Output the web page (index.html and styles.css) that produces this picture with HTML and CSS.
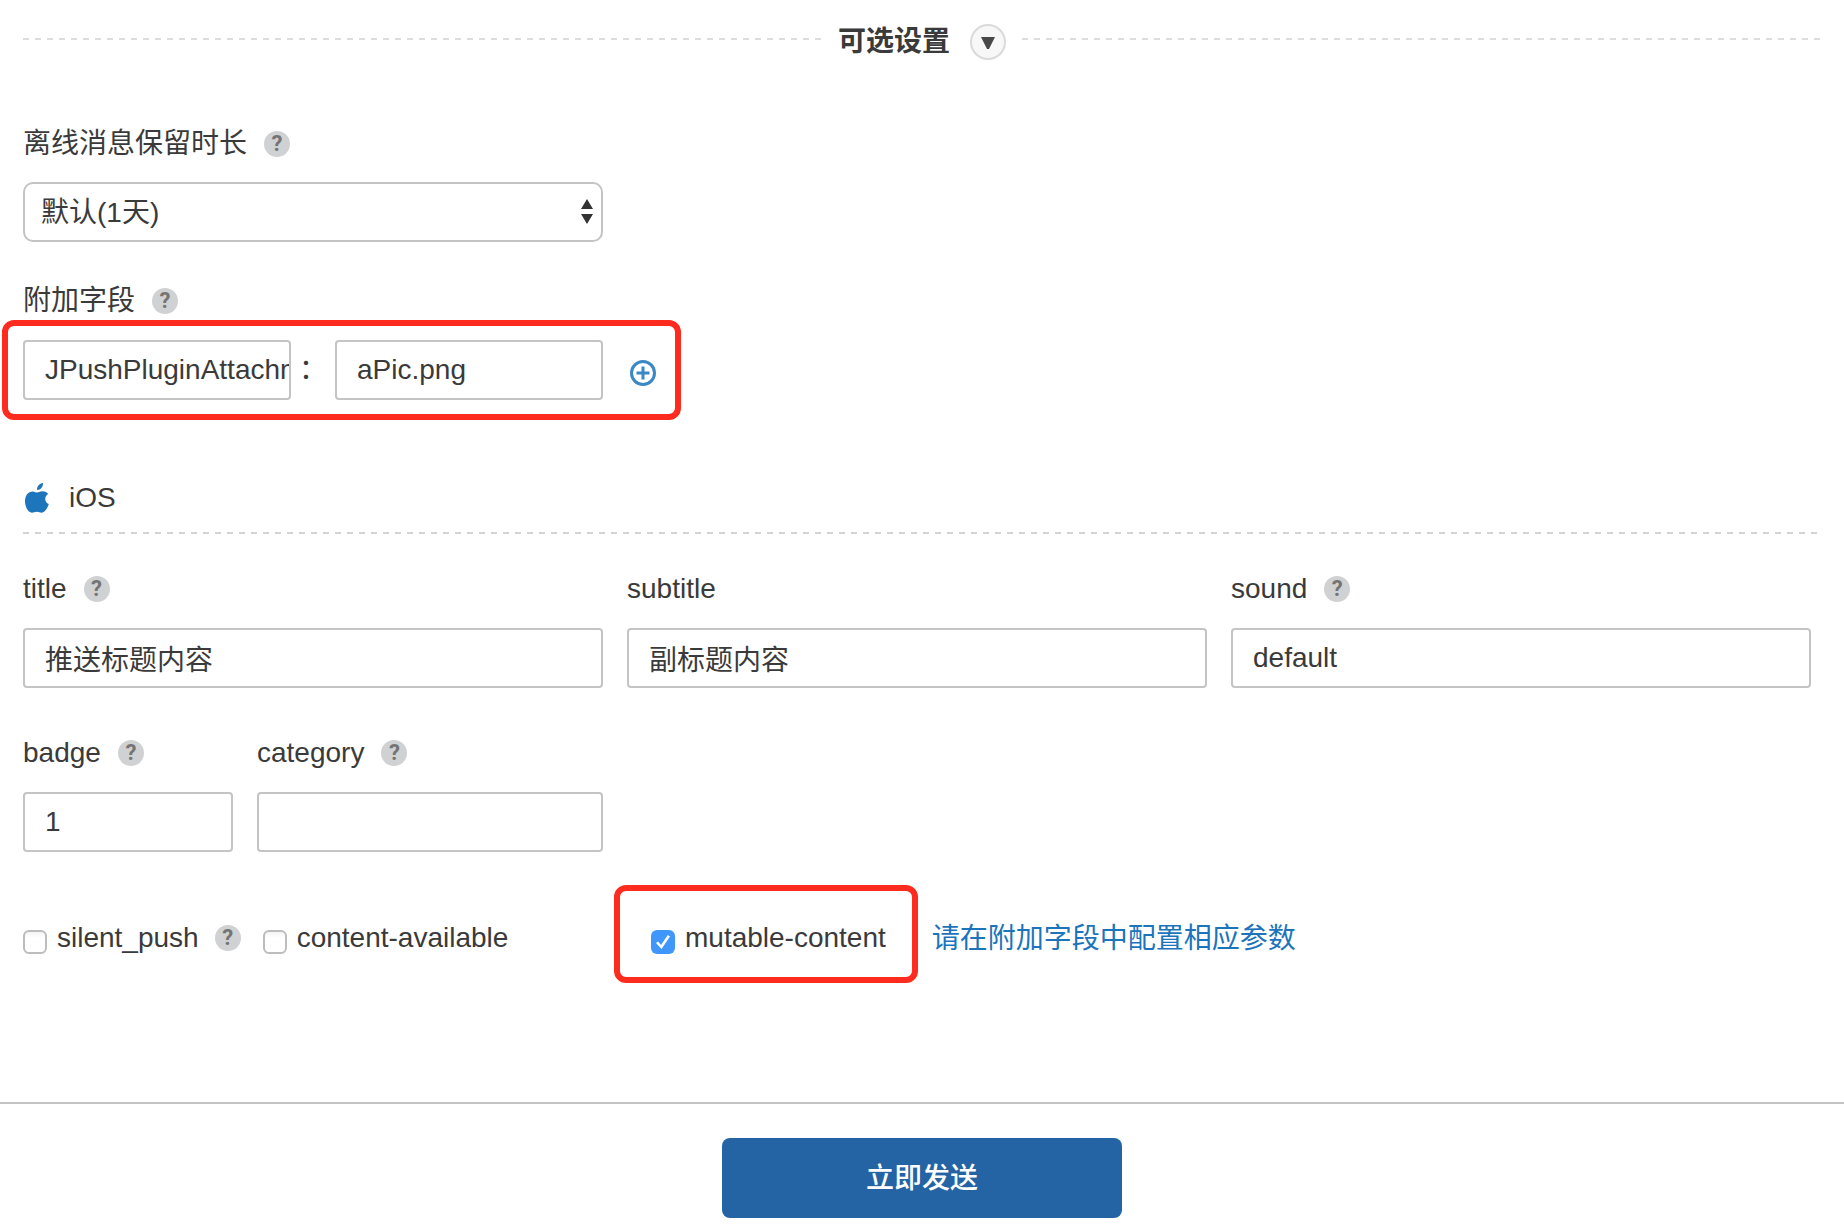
FILE: index.html
```html
<!DOCTYPE html>
<html lang="zh-CN">
<head>
    <meta charset="UTF-8">
    <meta name="viewport" content="width=device-width, initial-scale=1.0">
    <title>可选设置</title>
    <link rel="stylesheet" href="styles.css">
</head>
<body>
    <form class="push-form">
        <div class="optional-header">
            <h2>可选设置</h2>
            <button type="button" class="toggle" aria-label="展开">
                <svg width="36" height="36" viewBox="0 0 36 36">
                    <circle cx="18" cy="18" r="17" fill="#f7f7f7" stroke="#dadada" stroke-width="2"/>
                    <path d="M11 13h14l-6 12h-2z" fill="#484848"/>
                </svg>
            </button>
        </div>

        <div class="row">
            <div class="field">
                <div class="field-label">
                    <label for="timeToLive">离线消息保留时长</label>
                    <button type="button" class="help" aria-label="帮助">?</button>
                </div>
                <div class="select-wrap">
                    <select id="timeToLive">
                        <option>默认(1天)</option>
                    </select>
                    <svg class="select-arrows" width="12" height="25" viewBox="0 0 12 25">
                        <path d="M6 0l6 10H0zM6 25l6-10H0z" fill="#333"/>
                    </svg>
                </div>
            </div>
        </div>

        <div class="row row-extras">
            <div class="field">
                <div class="field-label">
                    <label for="extraKey">附加字段</label>
                    <button type="button" class="help" aria-label="帮助">?</button>
                </div>
                <div class="highlight extras">
                    <input type="text" id="extraKey" value="JPushPluginAttachment">
                    <span class="colon">：</span>
                    <input type="text" id="extraValue" aria-label="附加字段值" value="aPic.png">
                    <button type="button" class="add" aria-label="添加">
                        <svg width="26" height="26" viewBox="0 0 26 26" fill="none" stroke="#3a88c5">
                            <circle cx="13" cy="13" r="11.5" stroke-width="3"/>
                            <path d="M13 6.500v13M6.500 13h13" stroke-width="3"/>
                        </svg>
                    </button>
                </div>
            </div>
        </div>

        <div class="platform">
            <svg width="26" height="30" viewBox="0 0 26 30" fill="#1d75bb">
                <path d="M20 0c.3 3.600-2.200 7-6 7-.3-3.700 2.400-6.600 6-7z"/>
                <path d="M14 9.500c1.700 0 3.200-1.200 5.600-1.200 2.400 0 4.400 1 5.500 2.600-4 2.600-3.800 8.200.7 10.200-1.200 4-4 8.600-7.200 8.600-1.800 0-2.700-1-4.800-1s-3.200 1-4.900 1C5.500 29.700 2 24.300 2 18.300c0-6.200 3.500-9.900 7.500-9.900 1.900 0 3.200 1.100 4.500 1.100z"/>
            </svg>
            <h3>iOS</h3>
        </div>

        <div class="row">
            <div class="field">
                <div class="field-label">
                    <label for="title">title</label>
                    <button type="button" class="help" aria-label="帮助">?</button>
                </div>
                <input type="text" id="title" value="推送标题内容">
            </div>
            <div class="field">
                <div class="field-label">
                    <label for="subtitle">subtitle</label>
                </div>
                <input type="text" id="subtitle" value="副标题内容">
            </div>
            <div class="field">
                <div class="field-label">
                    <label for="sound">sound</label>
                    <button type="button" class="help" aria-label="帮助">?</button>
                </div>
                <input type="text" id="sound" value="default">
            </div>
        </div>

        <div class="row row-badge">
            <div class="split">
                <div class="field">
                    <div class="field-label">
                        <label for="badge">badge</label>
                        <button type="button" class="help" aria-label="帮助">?</button>
                    </div>
                    <input type="text" id="badge" value="1">
                </div>
                <div class="field">
                    <div class="field-label">
                        <label for="category">category</label>
                        <button type="button" class="help" aria-label="帮助">?</button>
                    </div>
                    <input type="text" id="category">
                </div>
            </div>
        </div>

        <div class="row row-checks">
            <div class="checks">
                <div class="check">
                    <input type="checkbox" id="silentPush">
                    <label for="silentPush">silent_push</label>
                    <button type="button" class="help" aria-label="帮助">?</button>
                </div>
                <div class="check">
                    <input type="checkbox" id="contentAvailable">
                    <label for="contentAvailable">content-available</label>
                </div>
            </div>
            <div class="mutable">
                <div class="highlight check">
                    <input type="checkbox" id="mutableContent" checked>
                    <label for="mutableContent">mutable-content</label>
                </div>
                <a href="#extraKey">请在附加字段中配置相应参数</a>
            </div>
        </div>

        <div class="form-footer">
            <button type="submit" class="submit">立即发送</button>
        </div>
    </form>
</body>
</html>
```
FILE: styles.css
```css
* {
    box-sizing: border-box;
}
body {
    margin: 0;
    background-color: #fff;
    color: #3a3a3a;
    font-family: "Liberation Sans", "Noto Sans CJK SC", sans-serif;
    font-size: 28px;
    line-height: 40px;
}
button, input, select {
    font: inherit;
    color: inherit;
}
button {
    padding: 0;
    border: none;
    background: none;
    cursor: pointer;
}
svg {
    display: block;
}
.push-form {
    padding-top: 22px;
}
.optional-header {
    display: flex;
    align-items: center;
    margin: 0 23px 62px;
}
.optional-header::before,
.optional-header::after {
    content: "";
    flex: 1;
    height: 2px;
    margin-bottom: 6px;
    background: repeating-linear-gradient(90deg, #ddd 0 6px, transparent 6px 12px);
}
.optional-header h2 {
    margin: 0 20px 0 16px;
    font-size: 28px;
    font-weight: bold;
}
.toggle {
    margin-right: 16px;
}
.row {
    display: grid;
    grid-template-columns: repeat(3, 1fr);
    gap: 24px;
    margin: 0 33px 0 23px;
}
.row-extras {
    margin-top: 39px;
}
.row-badge {
    margin-top: 45px;
}
.row-checks {
    margin-top: 33px;
    margin-bottom: 119px;
}
.field {
    min-width: 0;
}
.field-label {
    display: flex;
    align-items: center;
    gap: 17px;
    margin-bottom: 18px;
}
.row-badge .field-label,
.platform + .row .field-label {
    margin-bottom: 19px;
}
.help {
    width: 26px;
    height: 26px;
    border-radius: 50%;
    background-color: #cfd1d2;
    color: #747474;
    font-family: Roboto, sans-serif;
    font-size: 22px;
    font-weight: bold;
    line-height: 26px;
}
input[type="text"],
select {
    display: block;
    width: 100%;
    height: 60px;
    border: 2px solid #c4c4c4;
    background-color: #fff;
}
input[type="text"] {
    padding: 0 0 0 20px;
    border-radius: 4px;
}
.select-wrap {
    position: relative;
}
select {
    appearance: none;
    padding: 2px 32px 0 16px;
    border-radius: 10px;
}
.select-arrows {
    position: absolute;
    top: 17px;
    right: 10px;
    pointer-events: none;
}
.highlight {
    border: 6px solid #fd2c1e;
    border-radius: 12px;
}
.row-extras .field-label {
    margin-bottom: 19px;
}
.extras {
    display: flex;
    align-items: center;
    margin: -20px -78px 0 -21px;
    padding: 14px 19px 14px 15px;
}
.extras input {
    flex: 1;
    min-width: 0;
}
.colon {
    width: 44px;
    padding-left: 8px;
}
.add {
    margin: 6px 0 0 27px;
}
.platform {
    display: flex;
    align-items: center;
    gap: 20px;
    margin: 58px 23px 35px;
    padding-bottom: 16px;
    background: repeating-linear-gradient(90deg, #d4d4d4 0 6px, transparent 6px 12px) bottom / 100% 2px no-repeat;
}
.platform h3 {
    margin: 0;
    font-size: 28px;
    font-weight: normal;
}
.split {
    display: grid;
    grid-template-columns: 210px 1fr;
    gap: 24px;
}
.checks,
.mutable,
.check {
    display: flex;
    align-items: center;
}
.checks {
    gap: 22px;
    padding-top: 8px;
}
.check {
    white-space: nowrap;
}
.check label {
    margin-left: 10px;
}
.check .help {
    margin-left: 16px;
}
input[type="checkbox"] {
    appearance: none;
    width: 24px;
    height: 24px;
    margin: 8px 0 0;
    border: 2px solid #bdbdbd;
    border-radius: 6px;
    background: linear-gradient(#f4f4f4, #fff 30%);
}
input[type="checkbox"]:checked {
    display: grid;
    place-items: center;
    border: none;
    background: #3f97fb;
}
input[type="checkbox"]:checked::before {
    content: "";
    width: 14px;
    height: 14px;
    background-color: #fff;
    clip-path: polygon(0 58%, 15% 47%, 36% 72%, 84% 0, 100% 10%, 39% 100%);
}
.mutable {
    grid-column: span 2;
    gap: 14px;
    margin-left: -13px;
}
.mutable .highlight {
    padding: 27px 26px 19px 31px;
}
.mutable a {
    padding-top: 10px;
    color: #1c74bb;
    text-decoration: none;
}
.form-footer {
    display: flex;
    justify-content: center;
    padding: 34px 0 6px;
    border-top: 2px solid #c4c4c4;
}
.submit {
    width: 400px;
    height: 80px;
    padding-top: 2px;
    border-radius: 8px;
    background-color: #2464a4;
    color: #fff;
    font-weight: 500;
}
```
